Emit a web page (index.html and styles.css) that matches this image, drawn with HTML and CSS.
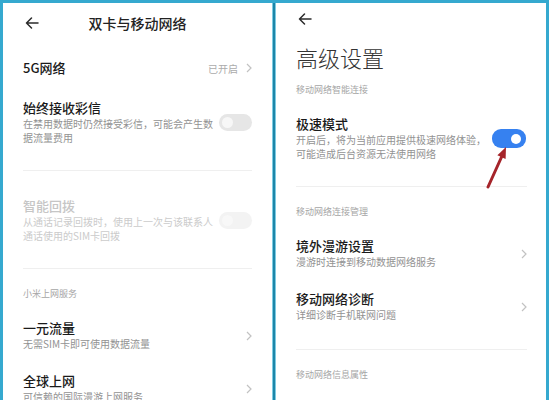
FILE: index.html
```html
<!DOCTYPE html>
<html lang="zh-CN">
<head>
  <meta charset="UTF-8">
  <title>双卡与移动网络</title>
  <link rel="stylesheet" href="styles.css">
</head>
<body>

<div class="screen">
  <section class="panel panel-left">
    <header class="bar">
      <svg class="icon-back" viewBox="0 0 14 12" width="14" height="12"><path d="M13 6H1.5M6.5 1L1.5 6l5 5"/></svg>
      <h1 class="bar-title">双卡与移动网络</h1>
    </header>

    <div class="row row-single">
      <p class="row-title">5G网络</p>
      <span class="row-value">已开启</span>
      <svg class="chevron" viewBox="0 0 6 10" width="6" height="10"><path d="M1 1l4 4-4 4"/></svg>
    </div>

    <div class="row row-toggle">
      <div class="row-text">
        <p class="row-title">始终接收彩信</p>
        <p class="row-sub">在禁用数据时仍然接受彩信，可能会产生数<br>据流量费用</p>
      </div>
      <span class="toggle"><span class="knob"></span></span>
    </div>

    <div class="line"></div>

    <div class="row row-toggle is-disabled">
      <div class="row-text">
        <p class="row-title">智能回拨</p>
        <p class="row-sub">从通话记录回拨时，使用上一次与该联系人<br>通话使用的SIM卡回拨</p>
      </div>
      <span class="toggle"><span class="knob"></span></span>
    </div>

    <div class="line"></div>

    <p class="group-label">小米上网服务</p>

    <div class="row row-nav">
      <div class="row-text">
        <p class="row-title">一元流量</p>
        <p class="row-sub">无需SIM卡即可使用数据流量</p>
      </div>
      <svg class="chevron" viewBox="0 0 6 10" width="6" height="10"><path d="M1 1l4 4-4 4"/></svg>
    </div>

    <div class="row row-nav">
      <div class="row-text">
        <p class="row-title">全球上网</p>
        <p class="row-sub">可信赖的国际漫游上网服务</p>
      </div>
      <svg class="chevron" viewBox="0 0 6 10" width="6" height="10"><path d="M1 1l4 4-4 4"/></svg>
    </div>
  </section>

  <div class="split"></div>

  <section class="panel panel-right">
    <header class="bar bar-small">
      <svg class="icon-back" viewBox="0 0 14 12" width="14" height="12"><path d="M13 6H1.5M6.5 1L1.5 6l5 5"/></svg>
    </header>
    <h1 class="page-title">高级设置</h1>

    <p class="group-label">移动网络智能连接</p>

    <div class="row row-toggle">
      <div class="row-text">
        <p class="row-title">极速模式</p>
        <p class="row-sub">开启后，将为当前应用提供极速网络体验，<br>可能造成后台资源无法使用网络</p>
      </div>
      <span class="toggle is-on"><span class="knob"></span></span>
    </div>

    <div class="line"></div>

    <p class="group-label">移动网络连接管理</p>

    <div class="row row-nav">
      <div class="row-text">
        <p class="row-title">境外漫游设置</p>
        <p class="row-sub">漫游时连接到移动数据网络服务</p>
      </div>
      <svg class="chevron" viewBox="0 0 6 10" width="6" height="10"><path d="M1 1l4 4-4 4"/></svg>
    </div>

    <div class="row row-nav">
      <div class="row-text">
        <p class="row-title">移动网络诊断</p>
        <p class="row-sub">详细诊断手机联网问题</p>
      </div>
      <svg class="chevron" viewBox="0 0 6 10" width="6" height="10"><path d="M1 1l4 4-4 4"/></svg>
    </div>

    <div class="line"></div>

    <p class="group-label">移动网络信息属性</p>

    <!-- red annotation arrow pointing at the switch -->
    <svg class="mark" viewBox="0 0 32 52" width="32" height="52">
      <path d="M7 46L21 15" />
      <polygon points="25,6 24.6,17.9 16.4,14.2" />
    </svg>
  </section>
</div>

</body>
</html>
```

FILE: styles.css
```css
* {
  margin: 0;
  padding: 0;
  box-sizing: border-box;
}
body {
  font-family: "Noto Sans CJK SC", "Noto Sans", sans-serif;
  color: #1c1c1c;
  background: #fff;
}
.screen {
  display: flex;
  width: 549px;
  height: 400px;
  padding: 3px 3px 0 3px;
  background: #35a9cf;
  overflow: hidden;
}
.split {
  width: 4px;
  flex: none;
  background: #1d86a8;
  border-left: 1px solid #7ccbe3;
  border-right: 1px solid #7ccbe3;
}
.panel {
  background: #fff;
  position: relative;
  overflow: hidden;
}
.panel-left {
  width: 269px;
  padding: 0 20px;
}
.panel-right {
  width: 270px;
  padding: 0 19px 0 20px;
}

/* header */
.bar {
  height: 40px;
  display: grid;
  grid-template-columns: 1fr auto 1fr;
  align-items: center;
}
.bar-small {
  height: 32px;
}
.icon-back {
  margin-left: 2px;
}
.icon-back path {
  fill: none;
  stroke: #2b2b2b;
  stroke-width: 1.5;
  stroke-linecap: round;
  stroke-linejoin: round;
}
.bar-title {
  font-size: 14px;
  font-weight: 500;
  color: #222;
  line-height: 20px;
}
.page-title {
  font-size: 22px;
  font-weight: 300;
  color: #333;
  line-height: 30px;
  margin-top: 7px;
}

/* rows */
.row {
  display: flex;
  align-items: center;
  gap: 8px;
}
.row-text {
  flex: 1;
  min-width: 0;
}
.row-title {
  font-size: 13px;
  font-weight: 500;
  line-height: 16px;
  color: #1a1a1a;
}
.row-sub {
  font-size: 10px;
  line-height: 14px;
  color: #929292;
  white-space: nowrap;
  margin-top: 1px;
}
.row-single {
  height: 40px;
  margin-top: 5px;
}
.row-single .row-title {
  flex: 1;
}
.row-value {
  font-size: 10px;
  color: #ababab;
}
.row-toggle {
  padding: 12px 0;
  gap: 4px;
}
.row-nav {
  padding: 12px 0 10px;
}
.row-nav + .line {
  margin-top: 17px;
}
.is-disabled .row-title {
  color: #c6c6c6;
}
.is-disabled .row-sub {
  color: #cbcbcb;
}

.chevron {
  flex: none;
}
.chevron path {
  fill: none;
  stroke: #c2c2c2;
  stroke-width: 1.2;
}

/* switch */
.toggle {
  flex: none;
  width: 33px;
  height: 17px;
  border-radius: 9px;
  background: #e6e6e6;
  display: flex;
  align-items: center;
  padding: 0 3px;
}
.toggle .knob {
  width: 11px;
  height: 11px;
  border-radius: 50%;
  background: #f7f7f7;
}
.is-disabled .toggle {
  background: #f3f3f3;
}
.is-disabled .toggle .knob {
  background: #f8f8f8;
}
.toggle.is-on {
  width: 34px;
  height: 19px;
  background: #3681f0;
  justify-content: flex-end;
  padding: 0 5px;
  margin-right: 1px;
}
.toggle.is-on .knob {
  width: 10px;
  height: 10px;
  background: #fff;
}

.line {
  height: 1px;
  background: #efefef;
  margin: 13px 0 15px;
}
.group-label {
  font-size: 9px;
  line-height: 12px;
  color: #a6a6a6;
  padding: 4px 0 8px;
}
.panel-right .page-title + .group-label {
  margin-top: 8px;
}

.mark {
  position: absolute;
  left: 205px;
  top: 138px;
}
.mark path {
  stroke: #a5242a;
  stroke-width: 3;
  stroke-linecap: round;
}
.mark polygon {
  fill: #a5242a;
}
```
